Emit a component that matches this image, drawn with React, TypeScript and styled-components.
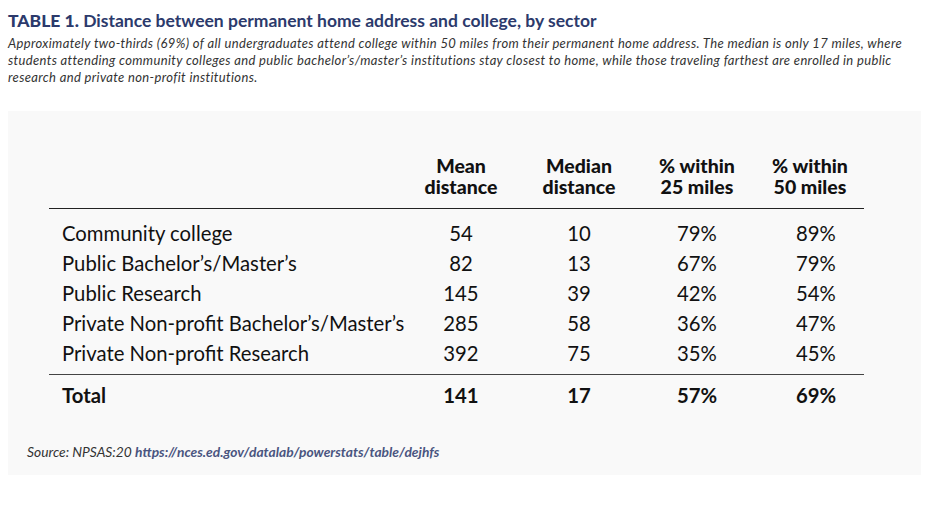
import React from "react";
import styled, { createGlobalStyle } from "styled-components";

const GlobalStyle = createGlobalStyle`
  html, body {
    margin: 0;
    padding: 0;
    background: #fff;
  }
  body {
    font-family: Lato, "Open Sans", sans-serif;
    color: #111;
  }
`;

const Page = styled.div`
  width: 936px;
  height: 506px;
  padding: 10px 8px 0;
  box-sizing: border-box;
`;

const Title = styled.h1`
  margin: 0;
  font-size: 17.5px;
  line-height: 22px;
  font-weight: 700;
  color: #2c3a6c;
`;

const Label = styled.span`
  font-weight: 900;
`;

const Caption = styled.p`
  margin: 3px 0 0;
  font-size: 13px;
  line-height: 17px;
  font-style: italic;
  letter-spacing: 0.35px;
  color: #333;
  white-space: nowrap;
`;

const Panel = styled.div`
  margin-top: 25px;
  width: 913px;
  height: 364px;
  background: #f9f9f9;
  padding: 44px 0 0 41px;
  box-sizing: border-box;
`;

const Grid = styled.div`
  width: 815px;
  display: grid;
  grid-template-columns: 353px 118px 118px 118px 108px;
`;

const Head = styled.div`
  font-size: 19.5px;
  line-height: 21px;
  font-weight: 900;
  text-align: center;
  padding-bottom: 11px;
  border-bottom: 1.5px solid #222;
  color: #111;
  &:last-child {
    padding-left: 12px;
  }
`;

const Cell = styled.div<{ $first?: boolean; $last?: boolean; $total?: boolean; $lead?: boolean }>`
  font-size: 20.3px;
  line-height: 30px;
  white-space: nowrap;
  font-weight: ${(p) => (p.$total ? 700 : 400)};
  text-align: ${(p) => (p.$lead ? "left" : "center")};
  padding-left: ${(p) => (p.$lead ? "13px" : "0")};
  color: #111;
  ${(p) => p.$first && "padding-top: 9px;"}
  ${(p) => p.$last && "padding-bottom: 6px; border-bottom: 1.5px solid #444;"}
  ${(p) => p.$total && "padding-top: 5px;"}
  &:nth-child(5n) {
    padding-left: 12px;
  }
`;

const Source = styled.p`
  margin: 33px 0 0 -22px;
  font-size: 13.8px;
  font-style: italic;
  color: #333;
`;

const Link = styled.span`
  font-weight: 700;
  color: #4a5580;
`;

const headers = [
  ["Mean", "distance"],
  ["Median", "distance"],
  ["% within", "25 miles"],
  ["% within", "50 miles"],
];

const rows: [string, string, string, string, string][] = [
  ["Community college", "54", "10", "79%", "89%"],
  ["Public Bachelor\u2019s/Master\u2019s", "82", "13", "67%", "79%"],
  ["Public Research", "145", "39", "42%", "54%"],
  ["Private Non-profit Bachelor\u2019s/Master\u2019s", "285", "58", "36%", "47%"],
  ["Private Non-profit Research", "392", "75", "35%", "45%"],
];

const total = ["Total", "141", "17", "57%", "69%"];

export default function App() {
  return (
    <>
      <GlobalStyle />
      <Page>
        <Title>
          <Label>TABLE 1.</Label> Distance between permanent home address and college, by sector
        </Title>
        <Caption>
          Approximately two-thirds (69%) of all undergraduates attend college within 50 miles from their
          permanent home address. The median is only 17 miles, where
          <br />
          students attending community colleges and public bachelor’s/master’s institutions stay closest to
          home, while those traveling farthest are enrolled in public
          <br />
          research and private non-profit institutions.
        </Caption>
        <Panel>
          <Grid>
            <Head />
            {headers.map(([a, b]) => (
              <Head key={a + b}>
                {a}
                <br />
                {b}
              </Head>
            ))}
            {rows.map((r, i) =>
              r.map((v, j) => (
                <Cell
                  key={i + "-" + j}
                  $lead={j === 0}
                  $first={i === 0}
                  $last={i === rows.length - 1}
                >
                  {v}
                </Cell>
              ))
            )}
            {total.map((v, j) => (
              <Cell key={"t" + j} $lead={j === 0} $total>
                {v}
              </Cell>
            ))}
          </Grid>
          <Source>
            Source: NPSAS:20 <Link>https://nces.ed.gov/datalab/powerstats/table/dejhfs</Link>
          </Source>
        </Panel>
      </Page>
    </>
  );
}
